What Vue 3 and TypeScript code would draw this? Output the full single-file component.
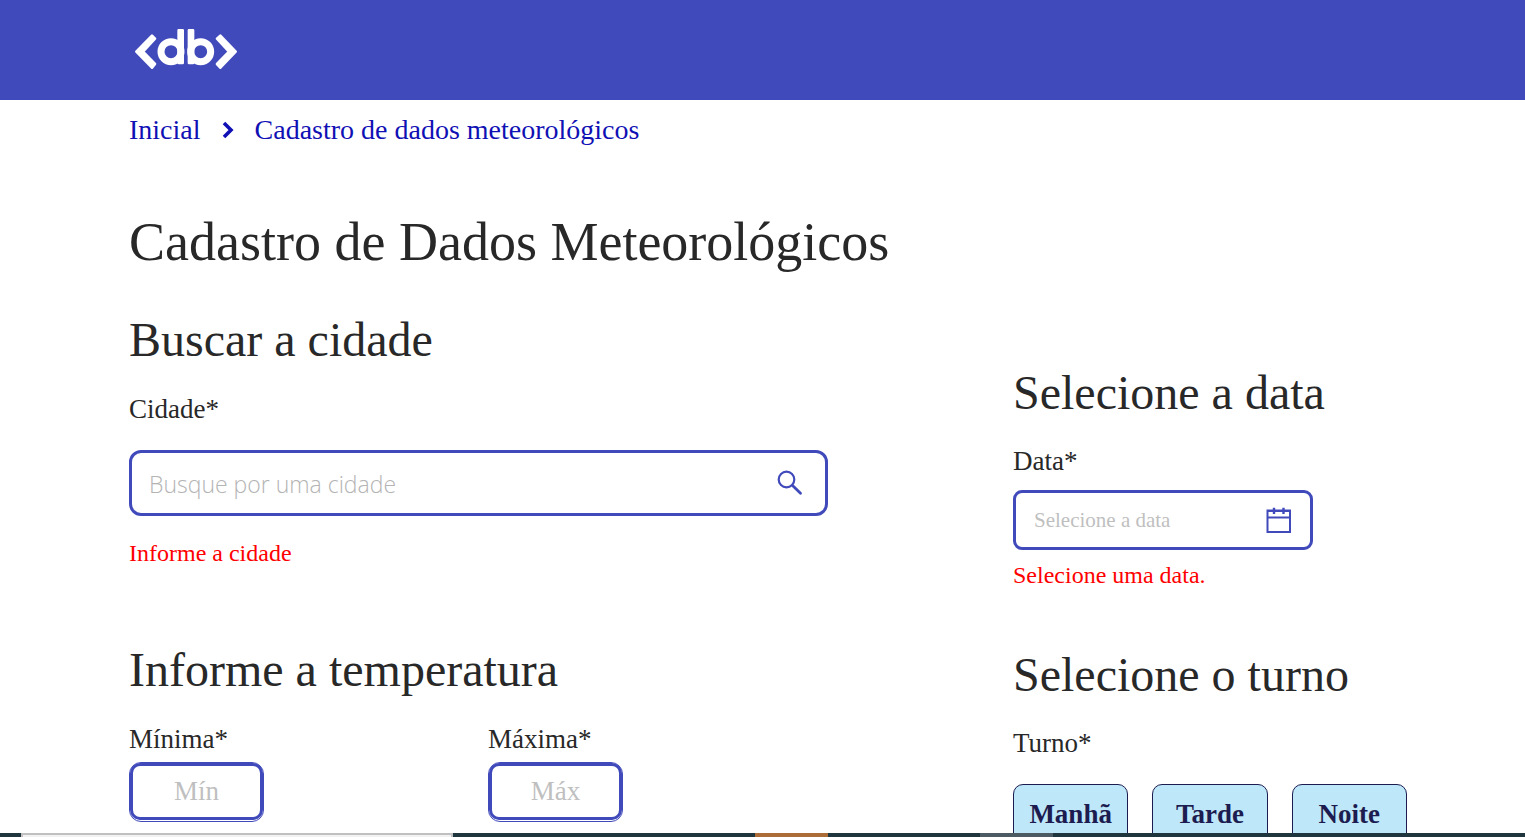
<script setup lang="ts">
import { ref } from 'vue'

interface Shift {
  id: string
  label: string
}

const shifts: Shift[] = [
  { id: 'morning', label: 'Manhã' },
  { id: 'afternoon', label: 'Tarde' },
  { id: 'night', label: 'Noite' },
]

const city = ref('')
const date = ref('')
const minimum = ref('')
const maximum = ref('')
const shift = ref('')
</script>

<template>
  <div class="page">
    <header class="topbar">
      <a class="logo" href="#" aria-label="db">
        <svg viewBox="0 0 312 126" width="104" height="42" aria-hidden="true">
          <g fill="#fff" stroke="#fff" stroke-width="8" stroke-linejoin="round">
            <path d="M7 71 L54 23 L63 32 L27 71 L63 108 L54 119 Z" />
            <path d="M305 71 L259 23 L249 32 L285 71 L249 108 L259 119 Z" />
            <path d="M134 7 H146 V105 H134 Z" />
            <path d="M165 7 H177 V105 H165 Z" />
          </g>
          <g fill="none" stroke="#fff" stroke-width="21">
            <circle cx="111" cy="71" r="30" />
            <circle cx="200" cy="71" r="30" />
          </g>
        </svg>
      </a>
    </header>

    <main class="content">
      <nav class="breadcrumb" aria-label="Trilha de navegação">
        <a href="#">Inicial</a>
        <svg viewBox="0 0 12 18" width="12" height="18" aria-hidden="true">
          <path d="M2 2 L9 9 L2 16" fill="none" stroke="#1010b4" stroke-width="3.6" />
        </svg>
        <a href="#" aria-current="page">Cadastro de dados meteorológicos</a>
      </nav>

      <h1>Cadastro de Dados Meteorológicos</h1>

      <form class="columns" @submit.prevent>
        <div class="column">
          <section>
            <h2>Buscar a cidade</h2>
            <label for="city">Cidade*</label>
            <div class="field city-field">
              <input id="city" v-model="city" type="text" placeholder="Busque por uma cidade" />
              <button class="icon-button" type="button" aria-label="Buscar">
                <svg viewBox="0 0 26 26" width="26" height="26" aria-hidden="true">
                  <g fill="none" stroke="#414abb" stroke-linecap="round">
                    <circle cx="9.5" cy="9.5" r="7.8" stroke-width="2.2" />
                    <path d="M15.5 15.5 L23.5 23.3" stroke-width="2.8" />
                  </g>
                </svg>
              </button>
            </div>
            <p class="error city-error">Informe a cidade</p>
          </section>

          <section class="temperature">
            <h2>Informe a temperatura</h2>
            <div class="temperature-grid">
              <div>
                <label for="minimum">Mínima*</label>
                <div class="small-field">
                  <input id="minimum" v-model="minimum" type="text" placeholder="Mín" />
                </div>
              </div>
              <div>
                <label for="maximum">Máxima*</label>
                <div class="small-field">
                  <input id="maximum" v-model="maximum" type="text" placeholder="Máx" />
                </div>
              </div>
            </div>
          </section>
        </div>

        <div class="column side">
          <section>
            <h2>Selecione a data</h2>
            <label for="date">Data*</label>
            <div class="field date-field">
              <input id="date" v-model="date" type="text" placeholder="Selecione a data" />
              <button class="icon-button" type="button" aria-label="Abrir calendário">
                <svg viewBox="0 0 26 26" width="26" height="26" aria-hidden="true">
                  <g fill="none" stroke="#414abb">
                    <path d="M1.5 3.5 H24 V25 H1.5 Z" stroke-width="2" />
                    <path d="M1.5 4 H24 M1.5 10.5 H24" stroke-width="2.2" />
                    <path d="M8 0.8 V7 M17.5 0.8 V7" stroke-width="2.4" />
                  </g>
                </svg>
              </button>
            </div>
            <p class="error date-error">Selecione uma data.</p>
          </section>

          <section class="shift">
            <h2>Selecione o turno</h2>
            <p id="shift-label" class="label">Turno*</p>
            <div class="shift-options" role="group" aria-labelledby="shift-label">
              <button
                v-for="item in shifts"
                :key="item.id"
                type="button"
                :aria-pressed="shift === item.id"
                @click="shift = item.id"
              >
                {{ item.label }}
              </button>
            </div>
          </section>
        </div>
      </form>
    </main>

    <div class="taskbar" aria-hidden="true">
      <span class="window"></span>
      <span class="alert"></span>
      <span class="idle"></span>
    </div>
  </div>
</template>

<style>
body {
  margin: 0;
  overflow: hidden;
}
</style>

<style scoped>
.page {
  height: 100vh;
  overflow: hidden;
  background: #fff;
  color: #282828;
  font-family: "Liberation Serif", "Times New Roman", serif;
}

.page * {
  box-sizing: border-box;
}

.topbar {
  display: flex;
  align-items: center;
  height: 100px;
  padding: 0 134px 2px;
  background: #414abb;
}

.logo,
.logo svg,
.icon-button svg {
  display: block;
}

.content {
  padding: 14px 118px 0 129px;
}

.breadcrumb {
  display: flex;
  align-items: center;
  gap: 21px;
  font-size: 28px;
  line-height: 32px;
}

.breadcrumb a {
  color: #1010b4;
  text-decoration: none;
}

h1,
h2,
p {
  margin: 0;
  font-weight: 400;
}

h1 {
  margin-top: 66px;
  font-size: 54px;
  line-height: 60px;
}

h2 {
  margin-bottom: 25px;
  font-size: 48px;
  line-height: 56px;
}

label,
.label {
  display: block;
  font-size: 27px;
  line-height: 32px;
}

.columns {
  display: grid;
  grid-template-columns: 1fr 394px;
  margin-top: 40px;
}

.side {
  padding-top: 53px;
}

.side h2 {
  margin-bottom: 24px;
}

.field {
  display: flex;
  align-items: center;
  border: 3px solid #414abb;
}

input {
  flex: 1;
  min-width: 0;
  height: 100%;
  padding: 0;
  border: 0;
  outline: 0;
  background: transparent;
  color: #282828;
  font-family: inherit;
}

input::placeholder {
  color: #bfbfbf;
  opacity: 1;
}

.icon-button {
  padding: 0;
  border: 0;
  background: transparent;
  cursor: pointer;
}

.city-field {
  width: calc(100% - 185px);
  height: 66px;
  margin-top: 25px;
  padding: 0 22px 0 17px;
  border-radius: 12px;
}

.city-field input {
  padding-top: 2px;
  font-family: "Open Sans", "Segoe UI", sans-serif;
  font-size: 23px;
  font-weight: 300;
}

.city-field input::placeholder {
  color: #b4b4b4;
}

.error {
  color: #f00;
  font-size: 24px;
  line-height: 28px;
}

.city-error {
  margin-top: 23px;
}

.temperature {
  margin-top: 75px;
}

.temperature-grid {
  display: flex;
  gap: 224px;
}

.small-field {
  width: 135px;
  height: 60px;
  margin-top: 7px;
  padding-bottom: 1px;
  border: 1px solid #414abb;
  border-radius: 12px;
}

.small-field input {
  display: block;
  width: 100%;
  border: 3px solid #414abb;
  border-radius: 10px;
  font-size: 27px;
  text-align: center;
}

.date-field {
  width: 300px;
  height: 60px;
  margin-top: 13px;
  padding: 0 18px;
  border-radius: 9px;
}

.date-field input {
  font-size: 21px;
}

.date-error {
  margin-top: 11px;
}

.shift {
  margin-top: 58px;
}

.shift-options {
  display: grid;
  grid-template-columns: repeat(3, 1fr);
  gap: 24px;
  margin-top: 25px;
}

.shift-options button {
  height: 60px;
  padding: 0;
  border: 1px solid #1c1c50;
  border-radius: 10px;
  background: #bee7f9;
  color: #1c1c50;
  font-family: inherit;
  font-size: 27px;
  font-weight: 700;
  cursor: pointer;
}

.taskbar {
  position: fixed;
  right: 0;
  bottom: 0;
  left: 0;
  display: flex;
  height: 4px;
  padding-left: 21px;
  background: #20363f;
}

.window {
  width: 432px;
  border: 2px solid #bfc0bf;
  border-bottom: 0;
  background: #f2f2f2;
}

.alert {
  width: 73px;
  margin-left: 302px;
  background: #ab6c37;
}

.idle {
  width: 73px;
  margin-left: 152px;
  background: #4b5a63;
}
</style>
